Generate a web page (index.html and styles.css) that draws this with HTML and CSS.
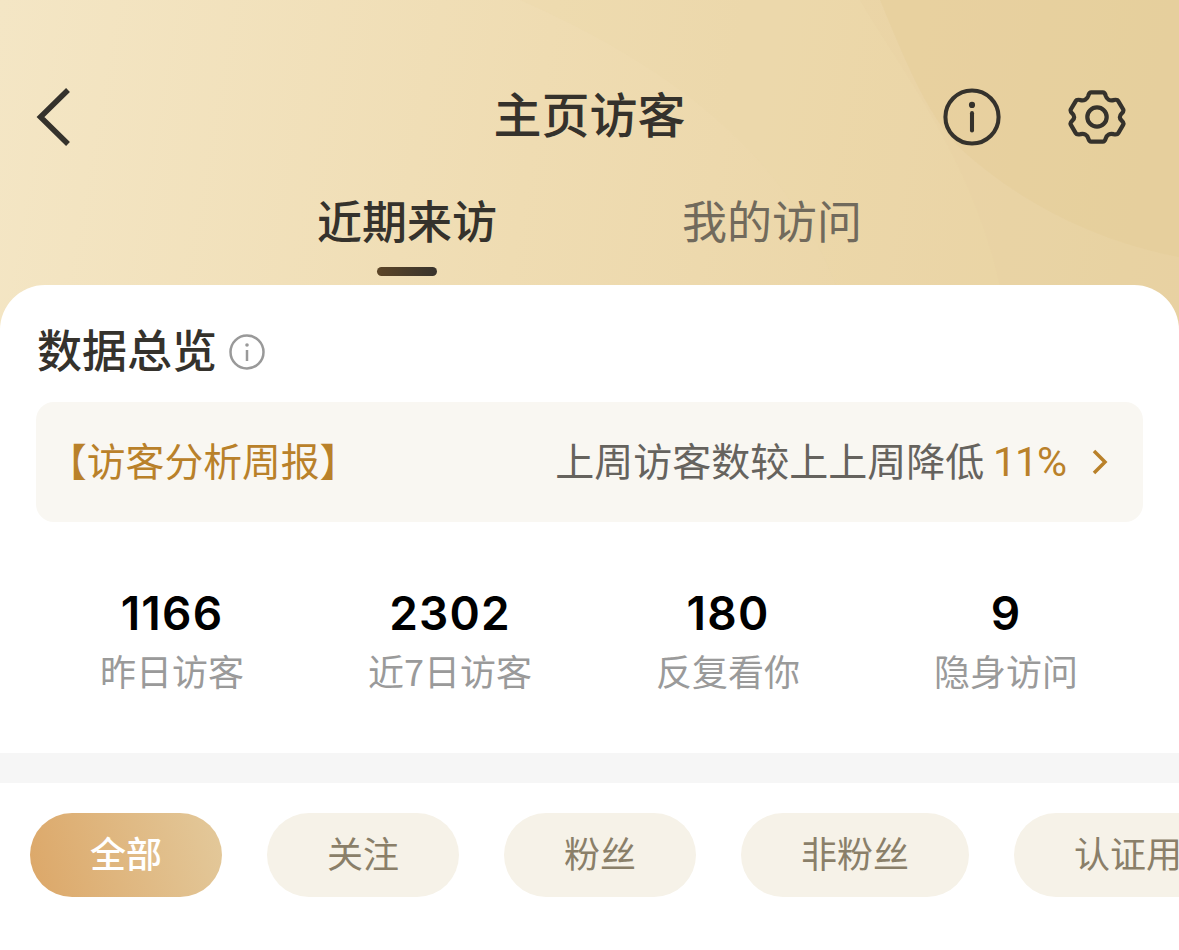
FILE: index.html
```html
<!DOCTYPE html>
<html lang="zh-CN">
<head>
<meta charset="utf-8">
<title>主页访客</title>
<link rel="stylesheet" href="styles.css">
</head>
<body>
<div class="page">
  <header class="hero">
    <svg class="hero-waves" viewBox="0 0 1179 330" preserveAspectRatio="none" aria-hidden="true">
      <path class="wave-a" d="M520 0 C680 70 810 170 850 330 L1179 330 L1179 0 Z"/>
      <path class="wave-b" d="M860 0 C900 70 990 180 1007 330 L1179 330 L1179 0 Z"/>
      <path class="wave-c" d="M880 0 C905 60 930 125 970 157 C1020 200 1090 240 1179 257 L1179 0 Z"/>
    </svg>
    <nav class="topbar">
      <button class="icon-btn back" aria-label="返回">
        <svg width="34" height="58" viewBox="0 0 34 58"><path d="M32 2 L4.500 29 L32 56" fill="none" stroke="#35322c" stroke-width="5.500"/></svg>
      </button>
      <h1 class="title">主页访客</h1>
      <div class="actions">
        <svg width="58" height="58" viewBox="0 0 60 60"><circle cx="30" cy="30" r="27.500" fill="none" stroke="#35322c" stroke-width="4.200"/><circle cx="30" cy="17.500" r="3.200" fill="#35322c"/><path d="M30 26 V44" stroke="#35322c" stroke-width="4.200" stroke-linecap="round"/></svg>
        <svg width="58" height="58" viewBox="0 0 60 60"><path d="M24 4.500 H36 C38 4.500 38.500 6 39 8 C40 11.500 43.500 13.500 47 12.500 C49 12 51 11.500 52 13.500 L57 22 C58 24 57 25 55.500 26.500 C53 29 53 31.500 55.500 33.700 C57 35 58 36.500 57 38.200 L52 46.700 C51 48.500 49 48.200 47 47.700 C43.500 46.700 40 48.700 39 52.200 C38.500 54 38 55.500 36 55.500 H24 C22 55.500 21.500 54 21 52.200 C20 48.700 16.500 46.700 13 47.700 C11 48.200 9 48.500 8 46.700 L3 38.200 C2 36.500 3 35 4.500 33.700 C7 31.500 7 29 4.500 26.500 C3 25 2 24 3 22 L8 13.500 C9 11.500 11 12 13 12.500 C16.500 13.500 20 11.500 21 8 C21.500 6 22 4.500 24 4.500 Z" fill="none" stroke="#35322c" stroke-width="4.400" stroke-linejoin="round"/><circle cx="30" cy="30" r="10" fill="none" stroke="#35322c" stroke-width="4.400"/></svg>
      </div>
    </nav>
    <div class="tabs">
      <div class="tab tab-active">近期来访<span class="tab-bar"></span></div>
      <div class="tab">我的访问</div>
    </div>
  </header>

  <main class="card">
    <section class="overview">
      <div class="overview-head">
        <h2 class="overview-title">数据总览</h2>
        <svg width="36" height="36" viewBox="0 0 36 36"><circle cx="18" cy="18" r="16.500" fill="none" stroke="#999" stroke-width="2.500"/><circle cx="18" cy="11" r="1.800" fill="#999"/><path d="M18 16 V27" stroke="#999" stroke-width="2.500"/></svg>
      </div>
      <div class="report">
        <span class="report-name">【访客分析周报】</span>
        <span class="report-text">上周访客数较上上周降低 <span class="report-num">11%</span></span>
        <svg class="report-arrow" width="18" height="26" viewBox="0 0 18 26"><path d="M3 2 L14 13 L3 24" fill="none" stroke="#b9812a" stroke-width="3.500"/></svg>
      </div>
      <div class="stats">
        <div class="stat"><div class="stat-num">1166</div><div class="stat-label">昨日访客</div></div>
        <div class="stat"><div class="stat-num">2302</div><div class="stat-label">近7日访客</div></div>
        <div class="stat"><div class="stat-num">180</div><div class="stat-label">反复看你</div></div>
        <div class="stat"><div class="stat-num">9</div><div class="stat-label">隐身访问</div></div>
      </div>
    </section>
    <div class="divider"></div>
    <div class="chips">
      <span class="chip chip-active">全部</span>
      <span class="chip">关注</span>
      <span class="chip">粉丝</span>
      <span class="chip">非粉丝</span>
      <span class="chip">认证用户</span>
    </div>
  </main>
</div>
</body>
</html>
```
FILE: styles.css
```css
* { box-sizing: border-box; }
html, body { margin: 0; padding: 0; background: #fff; }
body { font-family: "Noto Sans CJK SC", "Noto Sans", sans-serif; }
.page { width: 1179px; height: 950px; overflow: hidden; position: relative; }

.hero {
  position: relative;
  height: 330px;
  margin-bottom: -45px;
  padding-top: 87px;
  background: linear-gradient(100deg, #f4e6c5 0%, #efdcb2 45%, #e8d1a0 100%);
}
.hero-waves { position: absolute; left: 0; top: 0; width: 1179px; height: 330px; }
.wave-a { fill: #ecd6a7; opacity: .25; }
.wave-b { fill: #e9d2a1; opacity: .3; }
.wave-c { fill: #e4c88f; opacity: .28; }

.topbar {
  position: relative;
  height: 60px;
  display: flex;
  align-items: center;
  justify-content: space-between;
  padding: 0 53px 0 36px;
}
.icon-btn { background: none; border: 0; padding: 0; display: flex; }
.title {
  position: absolute;
  left: 0; right: 0; top: -4px;
  margin: 0;
  text-align: center;
  font-size: 48px;
  line-height: 58px;
  font-weight: 500;
  color: #35322c;
}
.actions { position: relative; display: flex; gap: 67px; }

.tabs {
  position: relative;
  display: flex;
  justify-content: center;
  gap: 185px;
  margin-top: 44px;
}
.tab {
  position: relative;
  width: 180px;
  font-size: 45px;
  line-height: 58px;
  color: #716a5c;
  text-align: center;
}
.tab-active { font-weight: 500; color: #35322c; }
.tab-bar {
  position: absolute;
  left: 60px;
  top: 76px;
  width: 60px;
  height: 9px;
  border-radius: 5px;
  background: linear-gradient(90deg, #5c4527, #38332c);
}

.card {
  position: relative;
  background: #fff;
  border-radius: 45px 45px 0 0;
  height: 665px;
}
.overview { height: 468px; padding: 38px 36px 0 37px; }
.overview-head { display: flex; align-items: center; gap: 12px; height: 58px; }
.overview-title { margin: 0; padding-bottom: 6px; font-size: 45px; line-height: 52px; font-weight: 500; color: #35322c; }
.report {
  margin-top: 21px;
  height: 120px;
  margin-left: -1px;
  padding: 0 34px 6px 12px;
  background: #f9f7f2;
  border-radius: 18px;
  display: flex;
  align-items: center;
}
.report-name { flex: 1; font-size: 38.800px; color: #b9812a; }
.report-text { font-size: 39px; color: #66635e; }
.report-num { color: #b9812a; font-family: "Roboto", sans-serif; font-weight: 400; font-size: 41px; letter-spacing: -1px; }
.report-arrow { margin-left: 25px; margin-top: 6px; }

.stats { display: grid; grid-template-columns: repeat(4, 278px); margin: 62px 0 0 -4px; }
.stat { text-align: center; }
.stat-num { font-family: "Inter", sans-serif; font-size: 46px; line-height: 58px; font-weight: 600; letter-spacing: 1.200px; color: #000; }
.stat-label { margin-top: 3px; font-size: 36px; line-height: 50px; color: #9a9a9a; }

.divider { height: 30px; background: #f6f6f6; }
.chips { display: flex; gap: 45px; padding: 30px 0 0 30px; white-space: nowrap; }
.chip {
  flex: none;
  height: 84px;
  padding: 0 60px 6px;
  border-radius: 42px;
  background: #f6f2e8;
  color: #8a7f69;
  font-size: 36px;
  line-height: 78px;
}
.chip-active { background: linear-gradient(75deg, #dca768, #e3c99b); color: #fff; font-weight: 500; }
```
